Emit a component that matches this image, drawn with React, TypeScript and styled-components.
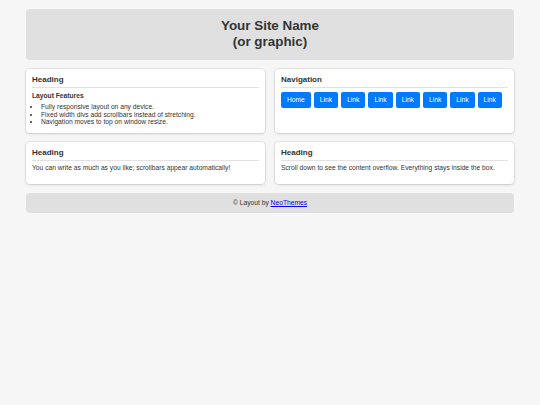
import styled, { createGlobalStyle } from 'styled-components';

const GlobalStyle = createGlobalStyle`
  html, body {
    margin: 0;
    padding: 0;
    background: #f6f6f6;
  }
  body {
    font-family: "Liberation Sans", Arial, Helvetica, sans-serif;
    color: #333;
  }
`;

const Page = styled.div`
  display: flex;
  flex-direction: column;
  gap: 9px;
  padding: 9px 26px;
`;

const Header = styled.header`
  padding: 9px 10px 10px;
  border-radius: 4px;
  background: #e0e0e0;
  text-align: center;

  h1 {
    margin: 0;
    font-size: 13.4px;
    line-height: 16px;
    font-weight: bold;
    color: #333;
  }
`;

const Row = styled.div`
  display: grid;
  grid-template-columns: 1fr 1fr;
  gap: 10px;
`;

const Card = styled.section`
  padding: 6px 6px 7px;
  border-radius: 4px;
  background: #fff;
  box-shadow: 0 0 0 1px rgba(0, 0, 0, 0.06), 0 1px 3px rgba(0, 0, 0, 0.12);
`;

const CardTitle = styled.h2`
  margin: 0;
  padding-bottom: 2px;
  border-bottom: 1px solid #e2e2e2;
  font-size: 8px;
  line-height: 10px;
  font-weight: bold;
  color: #333;
`;

const SubTitle = styled.h3`
  margin: 4px 0 0;
  font-size: 6.7px;
  line-height: 8px;
  font-weight: bold;
`;

const List = styled.ul`
  margin: 3px 0 0;
  padding-left: 9px;
  font-size: 6.7px;
  line-height: 7.5px;
`;

const Text = styled.p`
  margin: 3px 0 5px;
  font-size: 6.7px;
  line-height: 8px;
`;

const Nav = styled.nav`
  display: flex;
  flex-wrap: wrap;
  gap: 3px;
  margin-top: 4px;
`;

const NavButton = styled.a`
  display: block;
  padding: 4px 6px;
  border-radius: 2px;
  background: #007bff;
  color: #fff;
  font-size: 6.7px;
  line-height: 8px;
  text-decoration: none;
`;

const Footer = styled.footer`
  padding: 5px;
  border-radius: 4px;
  background: #e0e0e0;
  text-align: center;
  font-size: 6.7px;
  line-height: 10px;

  a {
    color: #0000ee;
  }
`;

const links = ['Home', 'Link', 'Link', 'Link', 'Link', 'Link', 'Link', 'Link'];

export default function App() {
  return (
    <>
      <GlobalStyle />
      <Page>
        <Header>
          <h1>
            Your Site Name
            <br />
            (or graphic)
          </h1>
        </Header>
        <Row>
          <Card>
            <CardTitle>Heading</CardTitle>
            <SubTitle>Layout Features</SubTitle>
            <List>
              <li>Fully responsive layout on any device.</li>
              <li>Fixed width divs add scrollbars instead of stretching.</li>
              <li>Navigation moves to top on window resize.</li>
            </List>
          </Card>
          <Card>
            <CardTitle>Navigation</CardTitle>
            <Nav>
              {links.map((l, i) => (
                <NavButton key={i} href="#">
                  {l}
                </NavButton>
              ))}
            </Nav>
          </Card>
        </Row>
        <Row>
          <Card>
            <CardTitle>Heading</CardTitle>
            <Text>You can write as much as you like; scrollbars appear automatically!</Text>
          </Card>
          <Card>
            <CardTitle>Heading</CardTitle>
            <Text>Scroll down to see the content overflow. Everything stays inside the box.</Text>
          </Card>
        </Row>
        <Footer>
          © Layout by <a href="#">NeoThemes</a>
        </Footer>
      </Page>
    </>
  );
}
